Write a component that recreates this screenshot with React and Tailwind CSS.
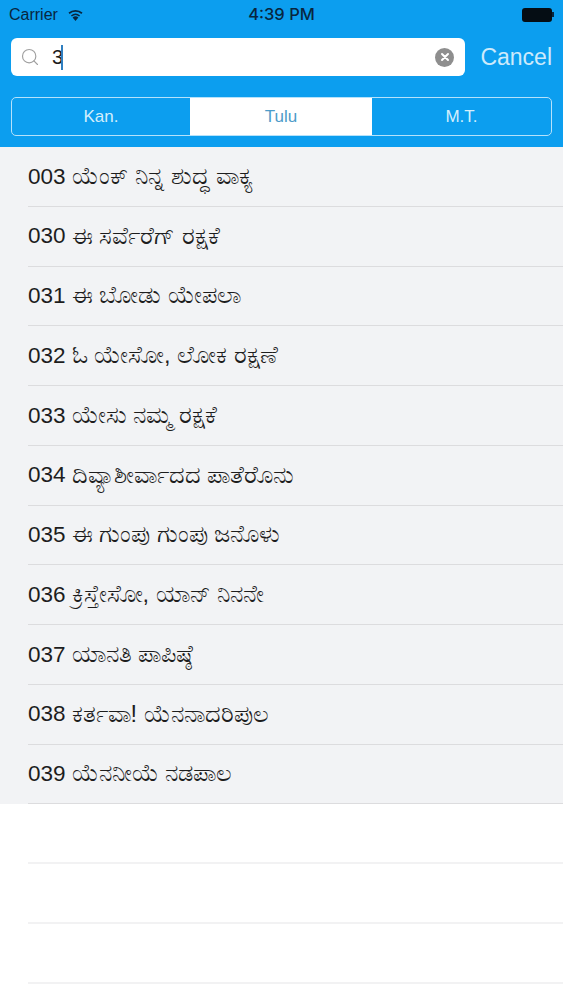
import React from "react";
import { Search } from "lucide-react";

const songs = [
  ["003", "ಯೆಂಕ್ ನಿನ್ನ ಶುದ್ಧ ವಾಕ್ಯ"],
  ["030", "ಈ ಸರ್ವೆರೆಗ್ ರಕ್ಷಕೆ"],
  ["031", "ಈ ಬೋಡು ಯೇಪಲಾ"],
  ["032", "ಓ ಯೇಸೋ, ಲೋಕ ರಕ್ಷಣೆ"],
  ["033", "ಯೇಸು ನಮ್ಮ ರಕ್ಷಕೆ"],
  ["034", "ದಿವ್ಯಾಶೀರ್ವಾದದ ಪಾತೆರೊನು"],
  ["035", "ಈ ಗುಂಪು ಗುಂಪು ಜನೊಳು"],
  ["036", "ಕ್ರಿಸ್ತೇಸೋ, ಯಾನ್ ನಿನನೇ"],
  ["037", "ಯಾನತಿ ಪಾಪಿಷ್ಠೆ"],
  ["038", "ಕರ್ತವಾ! ಯೆನನಾದರಿಪುಲ"],
  ["039", "ಯೆನನೀಯೆ ನಡಪಾಲ"],
];

const App = () => {
  return (
    <div className="w-[563px] h-[1000px] overflow-hidden bg-white font-['Liberation_Sans','Noto_Sans',sans-serif]">
      {/* Header */}
      <div className="h-[147px] bg-[#0c9eef] flex flex-col">
        <div className="h-[29px] px-[9px] flex items-center justify-between text-[16px] text-[#08263f]">
          <div className="w-[140px] flex items-center gap-[9px]">
            <span>Carrier</span>
            <svg width="17" height="13" viewBox="0 0 17 13" fill="#08263f">
              <path d="M8.5 13 L5.6 9.4 A4.6 4.6 0 0 1 11.4 9.4 Z" />
              <path d="M3.9 7.4 A7.2 7.2 0 0 1 13.1 7.4 L12.1 8.6 A5.6 5.6 0 0 0 4.9 8.6 Z" />
              <path d="M1.5 4.6 A10.6 10.6 0 0 1 15.5 4.6 L14.4 5.9 A9 9 0 0 0 2.6 5.9 Z" />
            </svg>
          </div>
          <span className="font-['Inter'] font-medium text-[16.5px]">4:39 PM</span>
          <div className="w-[140px] flex items-center justify-end">
            <div className="w-[30px] h-[14px] rounded-[3px] bg-[#050d14]" />
            <div className="w-[2px] h-[5px] bg-[#08263f]" />
          </div>
        </div>

        {/* Search row */}
        <div className="mt-[9px] px-[11px] flex items-center justify-between">
          <div className="w-[454px] h-[38px] bg-white rounded-[6px] flex items-center pl-[9px] pr-[11px]">
            <Search className="w-[20px] h-[20px] text-[#a0a0a0]" strokeWidth={1.4} />
            <span className="ml-[12px] text-[20px] text-[#1c1c1c] leading-none">3</span>
            <div className="-ml-[2px] w-[2px] h-[25px] bg-[#2f7fc0]" />
            <div className="ml-auto w-[19px] h-[19px] rounded-full bg-[#8e8e8e] flex items-center justify-center">
              <svg width="10" height="10" viewBox="0 0 10 10" stroke="white" strokeWidth="2" strokeLinecap="round">
                <path d="M2 2 L8 8 M8 2 L2 8" />
              </svg>
            </div>
          </div>
          <span className="text-[23px] text-[#cdeafb] leading-none">Cancel</span>
        </div>

        {/* Segments */}
        <div className="mt-[21px] mx-[11px] h-[39px] border border-[#b5e2fb] rounded-[5px] overflow-hidden grid grid-cols-[178px_182px_1fr] text-[17px] leading-none">
          <div className="flex items-center justify-center text-[#d3eefc]">Kan.</div>
          <div className="flex items-center justify-center bg-white text-[#4d9cc9]">Tulu</div>
          <div className="flex items-center justify-center text-[#d3eefc]">M.T.</div>
        </div>
      </div>

      {/* Song list */}
      <div className="bg-[#f2f3f5] pl-[28px]">
        {songs.map(([number, title]) => (
          <div
            key={number}
            className="h-[59.75px] flex items-center gap-[6px] border-b border-[#dcdcde] text-[#1d1d1d] whitespace-nowrap"
          >
            <span className="text-[22.5px]">{number}</span>
            <span className="text-[23.5px]">{title}</span>
          </div>
        ))}
      </div>
      <div className="pl-[28px]">
        <div className="h-[59.75px] border-b-2 border-[#f2f2f3]" />
        <div className="h-[59.75px] border-b-2 border-[#f2f2f3]" />
        <div className="h-[59.75px] border-b-2 border-[#f2f2f3]" />
      </div>
    </div>
  );
};

export default App;
